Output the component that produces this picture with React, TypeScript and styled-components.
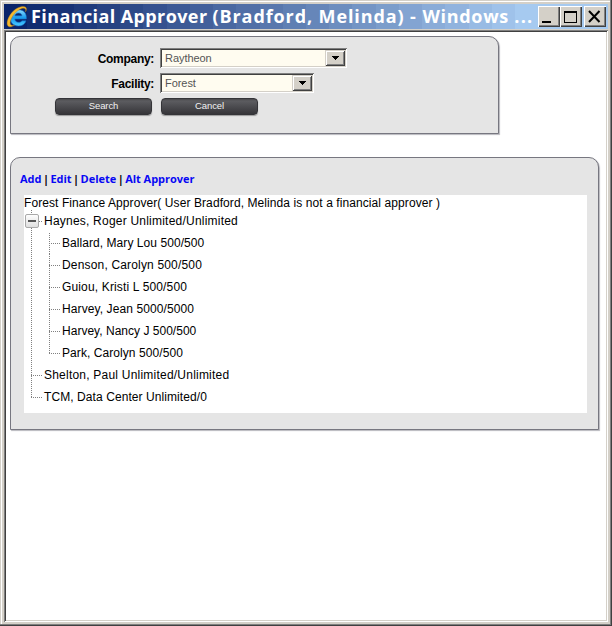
import React from "react";
import styled, { createGlobalStyle } from "styled-components";

const bandCount = 26;
const start = [10, 36, 106];
const end = [166, 202, 240];
const titleBands = Array.from({ length: bandCount }, (_, i) => {
  const t = Math.min(1, i / (bandCount - 4));
  const c = start.map((v, k) => Math.round(v + (end[k] - v) * t)).join(",");
  const a = ((i * 100) / bandCount).toFixed(3);
  const b = (((i + 1) * 100) / bandCount).toFixed(3);
  return `rgb(${c}) ${a}% ${b}%`;
}).join(",");

const Global = createGlobalStyle`
  * { box-sizing: border-box; }
  body { margin: 0; background: #d4d0c8; overflow: hidden; }
`;

const Frame = styled.div`
  width: 612px;
  height: 626px;
  background: #d4d0c8;
  padding: 4px;
  box-shadow: inset -1px -1px #404040, inset -2px -2px #808080,
    inset 1px 1px #d4d0c8, inset 2px 2px #fff;
  font-family: "Liberation Sans", Arial, sans-serif;
  font-size: 12px;
  color: #000;
`;

const TitleBar = styled.header`
  height: 25px;
  display: flex;
  align-items: flex-start;
  padding: 2px 2px 0 2px;
  background: linear-gradient(to right, ${titleBands});
`;

const Title = styled.h1`
  margin: 0 0 0 3px;
  width: 507px;
  height: 23px;
  font: bold 18px/20px "Open Sans", "Noto Sans", sans-serif;
  color: #fff;
  white-space: nowrap;
`;

const Run = styled.span<{ $tracking: number }>`
  letter-spacing: ${(p) => p.$tracking}px;
`;

const Caption = styled.button<{ $gap?: number }>`
  flex: none;
  width: 22px;
  height: 21px;
  margin: 0 0 0 ${(p) => p.$gap ?? 0}px;
  padding: 0;
  border: 0;
  background: #d4d0c8;
  box-shadow: inset 1px 1px #fff, inset -1px -1px #404040, inset -2px -2px #808080;
  svg { display: block; }
`;

const Client = styled.main`
  height: 592px;
  margin-top: 1px;
  padding: 6px;
  background: #fff;
  box-shadow: inset 1px 1px #808080, inset -1px -1px #fff, inset 2px 2px #404040,
    inset -2px -2px #d4d0c8;
`;

const Panel = styled.section<{ $w: number; $h: number }>`
  width: ${(p) => p.$w}px;
  height: ${(p) => p.$h}px;
  margin-bottom: 23px;
  background: #e5e5e5;
  border: 1px solid #777780;
  border-radius: 10px 10px 0 0;
  box-shadow: 1px 1px 1px #b8b8be;
`;

const Fields = styled.div`
  padding-top: 11px;
`;

const Field = styled.div`
  display: flex;
  height: 25px;
  align-items: flex-start;
`;

const Label = styled.label`
  width: 143px;
  margin-right: 6px;
  text-align: right;
  font-weight: bold;
  line-height: 22px;
  letter-spacing: -0.3px;
`;

const Combo = styled.div<{ $w: number }>`
  width: ${(p) => p.$w}px;
  height: 20px;
  display: flex;
  justify-content: space-between;
  padding: 2px;
  background: #fffcf0;
  box-shadow: inset 1px 1px #808080, inset -1px -1px #fff, inset 2px 2px #404040,
    inset -2px -2px #d4d0c8;
  color: #555;
  font-size: 11px;
  line-height: 17px;
`;

const ComboText = styled.span`
  padding-left: 3px;
  letter-spacing: -0.05px;
`;

const Arrow = styled.span`
  width: 20px;
  height: 16px;
  background: #d4d0c8;
  box-shadow: inset 1px 1px #d4d0c8, inset -1px -1px #404040, inset 2px 2px #fff,
    inset -2px -2px #808080;
  svg { display: block; }
`;

const Actions = styled.div`
  display: flex;
  gap: 9px;
  padding-left: 44px;
`;

const Action = styled.button`
  width: 97px;
  height: 17px;
  padding: 0 0 1px;
  border: 1px solid #343438;
  border-radius: 4px;
  background: linear-gradient(#48484b 0, #5c5c60 2px, #505054 6px, #363539 100%);
  box-shadow: 0 1px 1px #999;
  color: #f1f1f1;
  font: 9.5px/14px "Liberation Sans", Arial, sans-serif;
  letter-spacing: -0.1px;
`;

const Links = styled.nav`
  display: flex;
  padding: 13px 0 0 9px;
  height: 37px;
  white-space: nowrap;
  font: bold 11px/16px "Open Sans", "Noto Sans", sans-serif;
  letter-spacing: -0.03px;
  a { color: #0808f4; text-decoration: none; }
`;

const Divider = styled.span`
  width: 9px;
  text-align: center;
`;

const Tree = styled.div`
  width: 563px;
  height: 218px;
  margin-left: 13px;
  background: #fff;
`;

const Heading = styled.div`
  height: 15px;
  line-height: 16px;
  letter-spacing: 0.085px;
`;

const List = styled.ul<{ $indent: number }>`
  list-style: none;
  margin: 0;
  padding: 0 0 0 ${(p) => p.$indent}px;
`;

const Branch = styled.li<{ $top?: number; $last?: boolean }>`
  position: relative;
  &::before {
    content: "";
    position: absolute;
    left: 0;
    top: ${(p) => p.$top ?? 0}px;
    bottom: ${(p) => (p.$last ? 10 : 0)}px;
    width: 1px;
    background: repeating-linear-gradient(#808080 0 1px, transparent 1px 2px);
  }
`;

const Leaf = styled.div<{ $tracking: number }>`
  height: 22px;
  display: flex;
  align-items: flex-start;
  line-height: 22px;
  letter-spacing: ${(p) => p.$tracking}px;
  white-space: nowrap;
  &::before {
    content: "";
    width: 11px;
    height: 1px;
    margin: 11px 2px 0 0;
    background: repeating-linear-gradient(to right, #808080 0 1px, transparent 1px 2px);
  }
`;

const Toggle = styled.svg`
  position: absolute;
  left: -6px;
  top: 4px;
`;

const IeGlyph = styled.svg`
  flex: none;
`;

const IeIcon = () => (
  <IeGlyph width="22" height="23" viewBox="0 0 22 23">
    <defs>
      <linearGradient id="ie" x1="0" y1="0" x2="0" y2="1">
        <stop offset="0" stopColor="#8bdcff" />
        <stop offset=".5" stopColor="#169bef" />
        <stop offset="1" stopColor="#4bc9ff" />
      </linearGradient>
    </defs>
    <path
      d="M20.500 13H8.800c.3 2.200 1.700 3.300 3.800 3.300 1.500 0 2.600-.5 3.300-1.500h4.200c-1.100 3.500-3.900 5.200-7.700 5.200-5 0-8-3-8-7.900 0-5 3.200-8.300 8.300-8.300 5.200 0 8.100 3.600 7.800 9.200ZM8.900 9.800h7c-.3-1.800-1.500-2.700-3.400-2.700s-3.200.9-3.600 2.700Z"
      fill="url(#ie)"
      stroke="#1268bd"
      strokeWidth=".6"
    />
    <path
      d="M19.500 6C22.500.8 18.500-1.200 12 1.800 5 5.200.2 14 1.200 18.500c.8 3.300 4.500 2.800 7.500.6-2.900.8-4.800 0-4.500-2.500.5-4.500 4.500-10.200 9.200-13 4.500-2.400 7.300-1.600 6.100 2.400Z"
      fill="#f6b92c"
      stroke="#a47420"
      strokeWidth=".4"
    />
  </IeGlyph>
);

const DropArrow = () => (
  <Arrow>
    <svg width="20" height="16" shapeRendering="crispEdges">
      <path d="M7 6h7v1h-1v1h-1v1h-1v1h-1V9H9V8H8V7H7Z" />
    </svg>
  </Arrow>
);

const Collapse = () => (
  <Toggle width="14" height="14">
    <defs>
      <linearGradient id="knob" x1="0" y1="0" x2="0" y2="1">
        <stop offset="0" stopColor="#fff" />
        <stop offset="1" stopColor="#dedede" />
      </linearGradient>
    </defs>
    <rect x=".5" y=".5" width="13" height="13" rx="1.500" fill="url(#knob)" stroke="#a9a9a9" />
    <path d="M3 6h8v2H3z" fill="#555" />
  </Toggle>
);

const people = [
  { text: "Ballard, Mary Lou 500/500", tracking: 0.06 },
  { text: "Denson, Carolyn 500/500", tracking: 0.17 },
  { text: "Guiou, Kristi L 500/500", tracking: 0.15 },
  { text: "Harvey, Jean 5000/5000", tracking: 0.1 },
  { text: "Harvey, Nancy J 500/500", tracking: 0.02 },
  { text: "Park, Carolyn 500/500", tracking: 0.07 },
];

export default function App() {
  return (
    <>
      <Global />
      <Frame>
        <TitleBar>
          <IeIcon />
          <Title>
            <Run $tracking={0.4}>Financial Approver </Run>
            <Run $tracking={0.9}>(Bradford, Melinda) - </Run>
            <Run $tracking={0.7}>Windows </Run>
            <Run $tracking={1.2}>...</Run>
          </Title>
          <Caption aria-label="Minimize">
            <svg width="22" height="21"><path d="M4 15h9v2H4z" /></svg>
          </Caption>
          <Caption aria-label="Maximize">
            <svg width="22" height="21" shapeRendering="crispEdges">
              <path fillRule="evenodd" d="M4 5h13v12H4zM5 7v9h11V7z" />
            </svg>
          </Caption>
          <Caption aria-label="Close" $gap={2}>
            <svg width="22" height="21">
              <path d="m5 5 10.500 11M15.500 5 5 16" stroke="#000" strokeWidth="2" />
            </svg>
          </Caption>
        </TitleBar>
        <Client>
          <Panel $w={489} $h={98}>
            <Fields>
              <Field>
                <Label>Company:</Label>
                <Combo $w={187}><ComboText>Raytheon</ComboText><DropArrow /></Combo>
              </Field>
              <Field>
                <Label>Facility:</Label>
                <Combo $w={154}><ComboText>Forest</ComboText><DropArrow /></Combo>
              </Field>
              <Actions>
                <Action>Search</Action>
                <Action>Cancel</Action>
              </Actions>
            </Fields>
          </Panel>
          <Panel $w={589} $h={273}>
            <Links>
              <a>Add</a><Divider>|</Divider>
              <a>Edit</a><Divider>|</Divider>
              <a>Delete</a><Divider>|</Divider>
              <a>Alt Approver</a>
            </Links>
            <Tree>
              <Heading>Forest Finance Approver( User Bradford, Melinda is not a financial approver )</Heading>
              <List $indent={7}>
                <Branch>
                  <Leaf $tracking={0.22}>Haynes, Roger Unlimited/Unlimited</Leaf>
                  <Collapse />
                  <List $indent={18}>
                    {people.map((person, i) => (
                      <Branch key={person.text} $top={i === 0 ? 1 : 0} $last={i === people.length - 1}>
                        <Leaf $tracking={person.tracking}>{person.text}</Leaf>
                      </Branch>
                    ))}
                  </List>
                </Branch>
                <Branch><Leaf $tracking={0.22}>Shelton, Paul Unlimited/Unlimited</Leaf></Branch>
                <Branch $last><Leaf $tracking={0.08}>TCM, Data Center Unlimited/0</Leaf></Branch>
              </List>
            </Tree>
          </Panel>
        </Client>
      </Frame>
    </>
  );
}
